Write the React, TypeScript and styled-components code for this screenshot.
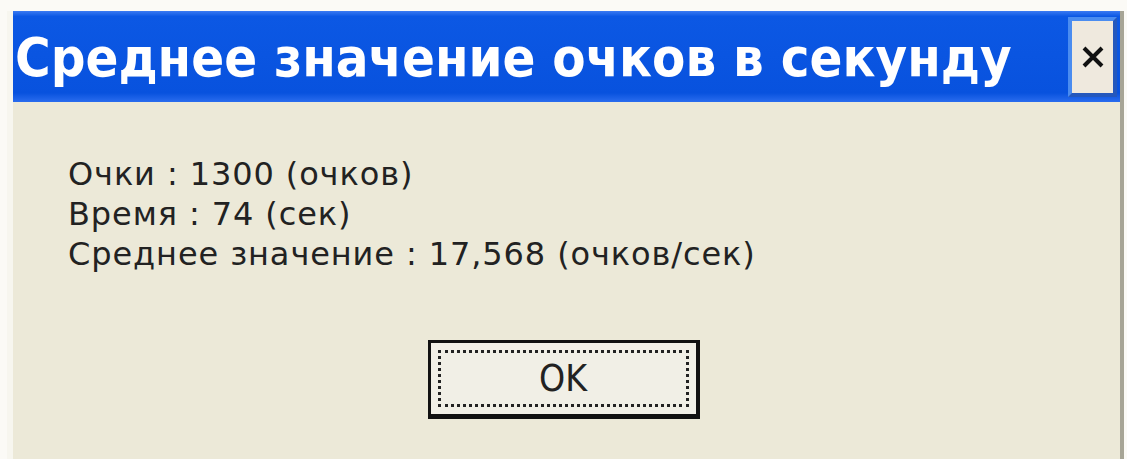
import React from "react";
import styled, { createGlobalStyle } from "styled-components";

const Global = createGlobalStyle`
  html, body { margin: 0; padding: 0; background: #fbfaf6; }
  #root { width: 1127px; height: 459px; }
`;

const Page = styled.div`
  width: 1127px;
  height: 459px;
  padding: 11px 3px 0 7px;
  box-sizing: border-box;
  display: flex;
`;

const Window = styled.div`
  flex: 1;
  display: flex;
  flex-direction: column;
  background: #ece9d8;
  border-left: 6px solid #f7f6ef;
  border-right: 4px solid #a7a596;
  box-sizing: border-box;
`;

const TitleBar = styled.div`
  height: 91px;
  background: linear-gradient(180deg, #3a7af2 0%, #0c58e4 6%, #0852de 90%, #2a6cee 100%);
  display: flex;
  align-items: center;
  justify-content: space-between;
  padding: 0 3px 0 2px;
  box-sizing: border-box;
`;

const Title = styled.div`
  font-family: "DejaVu Sans Condensed", "DejaVu Sans", Tahoma, sans-serif;
  font-weight: bold;
  font-size: 54px;
  line-height: 60px;
  color: #ffffff;
  white-space: nowrap;
  margin-top: 2px;
`;

const CloseButton = styled.button`
  width: 49px;
  height: 80px;
  background: #efe9de;
  border: 4px solid #4a8cf0;
  border-right-color: #2458bd;
  border-bottom-color: #2458bd;
  display: flex;
  align-items: center;
  justify-content: center;
  padding: 0;
  box-sizing: border-box;
`;

const Body = styled.div`
  flex: 1;
  display: flex;
  flex-direction: column;
  padding-top: 52px;
`;

const Info = styled.div`
  display: flex;
  flex-direction: column;
  padding-left: 55px;
`;

const Line = styled.div`
  font-family: "DejaVu Sans", Tahoma, sans-serif;
  font-size: 32px;
  line-height: 40px;
  letter-spacing: 0.9px;
  color: #222;
  white-space: nowrap;
`;

const ButtonRow = styled.div`
  display: flex;
  justify-content: center;
  margin-top: 66px;
  padding-right: 6px;
`;

const OkButton = styled.button`
  width: 272px;
  height: 79px;
  background: #f1efe6;
  border: 3px solid #111;
  border-bottom-width: 5px;
  border-right-width: 4px;
  padding: 7px;
  box-sizing: border-box;
  display: flex;
`;

const FocusRing = styled.div`
  flex: 1;
  border: 3px dotted #222;
  display: flex;
  align-items: center;
  justify-content: center;
  font-family: "DejaVu Sans Condensed", "DejaVu Sans", Tahoma, sans-serif;
  font-size: 37px;
  color: #222;
`;

export default function App() {
  return (
    <>
      <Global />
      <Page>
        <Window>
          <TitleBar>
            <Title>Среднее значение очков в секунду</Title>
            <CloseButton aria-label="Закрыть">
              <svg width="26" height="26" viewBox="0 0 26 26">
                <path d="M4 4 L22 22 M22 4 L4 22" stroke="#111" strokeWidth="4" />
              </svg>
            </CloseButton>
          </TitleBar>
          <Body>
            <Info>
              <Line>Очки : 1300 (очков)</Line>
              <Line>Время : 74 (сек)</Line>
              <Line>Среднее значение : 17,568 (очков/сек)</Line>
            </Info>
            <ButtonRow>
              <OkButton>
                <FocusRing>OK</FocusRing>
              </OkButton>
            </ButtonRow>
          </Body>
        </Window>
      </Page>
    </>
  );
}
